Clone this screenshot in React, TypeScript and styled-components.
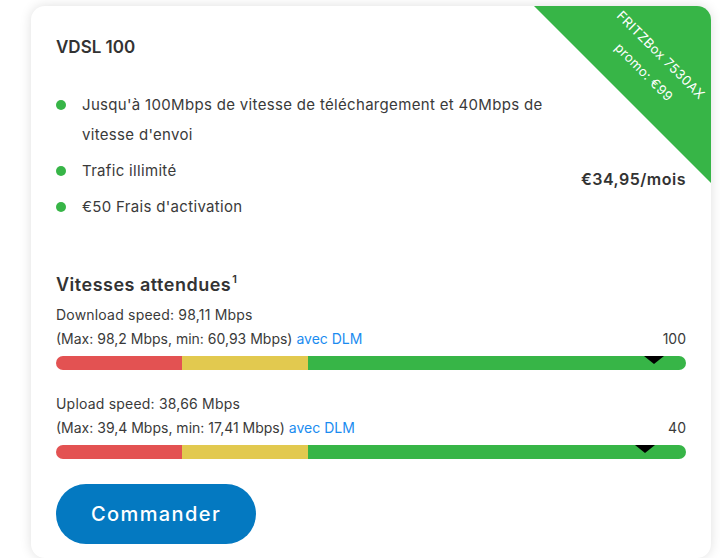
import React from 'react';
import styled, { createGlobalStyle } from 'styled-components';

const GlobalStyle = createGlobalStyle`
  html, body {
    margin: 0;
    padding: 0;
    background: #ffffff;
  }
  body {
    font-family: Inter, 'Open Sans', 'Liberation Sans', sans-serif;
    color: #3a3a3a;
  }
`;

const Page = styled.div`
  padding: 6px 9px 0 31px;
`;

const Card = styled.div`
  position: relative;
  overflow: hidden;
  height: 552px;
  box-sizing: border-box;
  padding: 28px 25px 14px;
  background: #fff;
  border-radius: 14px;
  box-shadow: 0 0 12px rgba(0, 0, 0, 0.13);
`;

const Ribbon = styled.div`
  position: absolute;
  top: 0;
  right: 0;
  width: 177px;
  height: 177px;
  background: #37b547;
  clip-path: polygon(0 0, 100% 0, 100% 100%);
`;

const RibbonText = styled.div`
  position: absolute;
  left: 521px;
  top: 33px;
  width: 200px;
  height: 50px;
  transform: rotate(45deg);
  color: #fff;
  font-size: 13px;
  letter-spacing: 0.4px;
  line-height: 24px;
  text-align: center;
`;

const Title = styled.h2`
  margin: 0;
  font-size: 17px;
  line-height: 26px;
  font-weight: 600;
  color: #333;
`;

const Features = styled.div`
  display: flex;
  align-items: flex-end;
  justify-content: space-between;
  margin-top: 30px;
`;

const List = styled.ul`
  list-style: none;
  margin: 0;
  padding: 0;
  max-width: 500px;
  display: flex;
  flex-direction: column;
  gap: 6px;
`;

const Item = styled.li`
  position: relative;
  padding-left: 26px;
  font-size: 15px;
  letter-spacing: 0.32px;
  line-height: 30px;

  &::before {
    content: '';
    position: absolute;
    left: 0;
    top: 10px;
    width: 10px;
    height: 10px;
    border-radius: 50%;
    background: #37b547;
  }
`;

const Price = styled.div`
  font-size: 16px;
  font-weight: 600;
  letter-spacing: 0.5px;
  color: #333;
  line-height: 24px;
  margin-bottom: 31px;
`;

const Heading = styled.h3`
  margin: 50px 0 5px;
  font-size: 18px;
  letter-spacing: 0.5px;
  line-height: 26px;
  font-weight: 600;
  color: #333;

  sup {
    font-size: 11px;
    line-height: 0;
    vertical-align: 8px;
    margin-left: 1px;
  }
`;

const SpeedBlock = styled.div<{ $gap?: number }>`
  margin-top: ${(p) => p.$gap ?? 0}px;
`;

const Line = styled.div<{ $spacing?: number }>`
  display: flex;
  justify-content: space-between;
  font-size: 14px;
  letter-spacing: ${(p) => p.$spacing ?? 0}px;
  line-height: 24px;
`;

const DLM = styled.a`
  color: #1b8cf0;
  text-decoration: none;
`;

const Bar = styled.div`
  position: relative;
  display: grid;
  grid-template-columns: 20% 20% 60%;
  height: 14px;
  margin-top: 5px;
  border-radius: 7px;
  overflow: hidden;
`;

const Segment = styled.div<{ $color: string }>`
  background: ${(p) => p.$color};
`;

const Marker = styled.div`
  position: absolute;
  top: 0;
  width: 0;
  height: 0;
  margin-left: -10px;
  border-left: 10px solid transparent;
  border-right: 10px solid transparent;
  border-top: 8px solid #000;
`;

const OrderButton = styled.button`
  margin-top: 25px;
  width: 200px;
  height: 60px;
  border: none;
  border-radius: 30px;
  background: #0479c1;
  color: #fff;
  font-family: inherit;
  font-size: 20px;
  letter-spacing: 1.4px;
  font-weight: 500;
  cursor: pointer;
`;

const speeds = [
  { label: 'Download speed: 98,11 Mbps', range: '(Max: 98,2 Mbps, min: 60,93 Mbps)', max: '100', pos: 94.9, gap: 0 },
  { label: 'Upload speed: 38,66 Mbps', range: '(Max: 39,4 Mbps, min: 17,41 Mbps)', max: '40', pos: 93.5, gap: 22 },
];

const App = () => {
  return (
    <Page>
      <GlobalStyle />
      <Card>
        <Ribbon />
        <RibbonText>
          FRITZBox 7530AX
          <br />
          promo: €99
        </RibbonText>
        <Title>VDSL 100</Title>
        <Features>
          <List>
            <Item>Jusqu'à 100Mbps de vitesse de téléchargement et 40Mbps de vitesse d'envoi</Item>
            <Item>Trafic illimité</Item>
            <Item>€50 Frais d'activation</Item>
          </List>
          <Price>€34,95/mois</Price>
        </Features>
        <Heading>
          Vitesses attendues<sup>1</sup>
        </Heading>
        {speeds.map((s) => (
          <SpeedBlock key={s.label} $gap={s.gap}>
            <Line $spacing={0.2}>{s.label}</Line>
            <Line>
              <span>
                {s.range} <DLM href="#">avec DLM</DLM>
              </span>
              <span>{s.max}</span>
            </Line>
            <Bar>
              <Segment $color="#e35252" />
              <Segment $color="#e2c94f" />
              <Segment $color="#37b547" />
              <Marker style={{ left: `${s.pos}%` }} />
            </Bar>
          </SpeedBlock>
        ))}
        <OrderButton>Commander</OrderButton>
      </Card>
    </Page>
  );
};

export default App;
